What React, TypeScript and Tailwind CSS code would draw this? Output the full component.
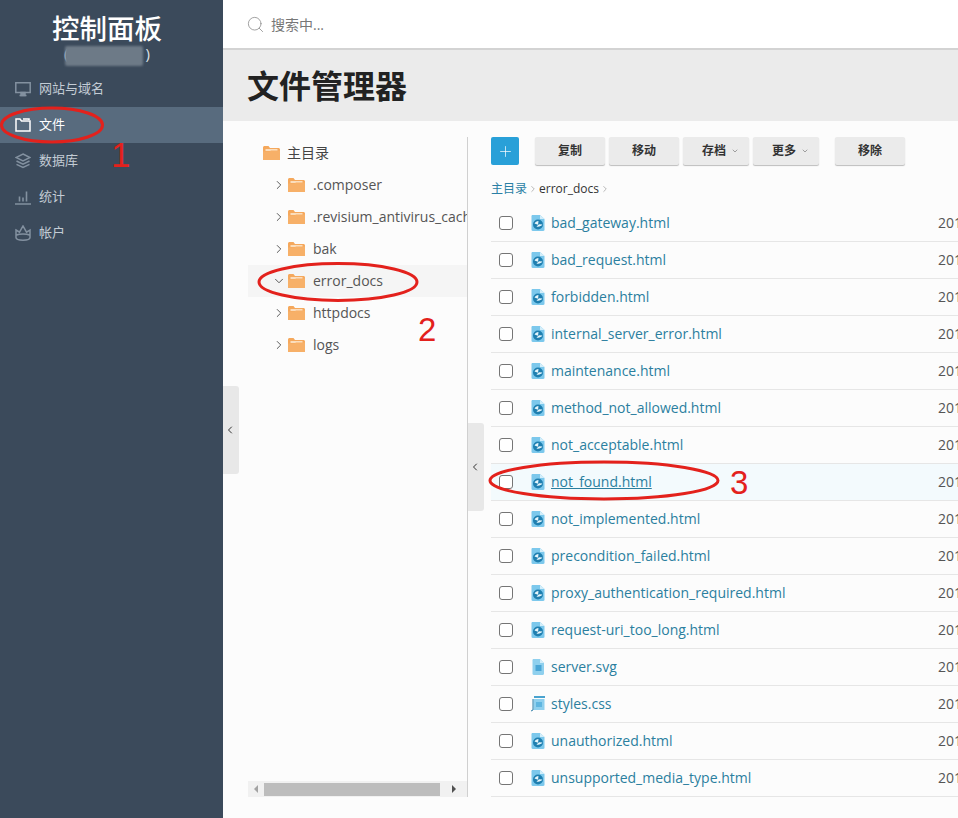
import { ChevronRight, ChevronDown, ChevronLeft, Plus, Search } from "lucide-react";

const FONT = "font-['Open_Sans','Noto_Sans_CJK_SC',sans-serif]";

const FILES = [
  { name: "bad_gateway.html", icon: "html" },
  { name: "bad_request.html", icon: "html" },
  { name: "forbidden.html", icon: "html" },
  { name: "internal_server_error.html", icon: "html" },
  { name: "maintenance.html", icon: "html" },
  { name: "method_not_allowed.html", icon: "html" },
  { name: "not_acceptable.html", icon: "html" },
  { name: "not_found.html", icon: "html", active: true },
  { name: "not_implemented.html", icon: "html" },
  { name: "precondition_failed.html", icon: "html" },
  { name: "proxy_authentication_required.html", icon: "html" },
  { name: "request-uri_too_long.html", icon: "html" },
  { name: "server.svg", icon: "svg" },
  { name: "styles.css", icon: "css" },
  { name: "unauthorized.html", icon: "html" },
  { name: "unsupported_media_type.html", icon: "html" },
];

const FOLDERS = [".composer", ".revisium_antivirus_cache", "bak", "error_docs", "httpdocs", "logs"];

function FolderIcon() {
  return (
    <svg width="17" height="14" viewBox="0 0 17 14" className="shrink-0">
      <path d="M0 1.5C0 .7.7 0 1.5 0h4L7 2h8.5c.8 0 1.5.7 1.5 1.5V14H0z" fill="#f5a85c" />
      <path d="M2.5 3.2h12v1.6h-12z" fill="#fdebd6" />
      <path d="M0 5.5h6.5L8 4.6h9V14H0z" fill="#f7b068" />
    </svg>
  );
}

function FileIcon({ kind }: { kind: string }) {
  if (kind === "css") {
    return (
      <svg width="16" height="16" viewBox="0 0 16 16" className="shrink-0">
        <path d="M4 0h11v2H4z" fill="#4aa3cf" />
        <path d="M3.5 3h11v11h-11z" fill="#8fd0ee" />
        <path d="M6 6h6v5H6z" fill="#5fb6e0" />
        <path d="M3 3v11L1 15" stroke="#2f7fa8" fill="none" />
      </svg>
    );
  }
  if (kind === "svg") {
    return (
      <svg width="16" height="16" viewBox="0 0 16 16" className="shrink-0">
        <path d="M2.5 1.2C2.5.5 3 0 3.7 0H10l4 4v10.8c0 .7-.5 1.2-1.200 1.200H3.700c-.7 0-1.200-.5-1.200-1.200z" fill="#8fd0ee" />
        <path d="M10 0l4 4h-4z" fill="#d3eefa" />
        <path d="M5.500 6h6v6h-6z" fill="#4aa6d6" />
      </svg>
    );
  }
  return (
    <svg width="16" height="16" viewBox="0 0 16 16" className="shrink-0">
      <path d="M1.500 1.200C1.500.5 2 0 2.700 0H10l4.500 4v10.800c0 .7-.5 1.200-1.200 1.200H2.700c-.7 0-1.200-.5-1.200-1.200z" fill="#7cc8ec" />
      <path d="M10 0l4.500 4H10z" fill="#d3eefa" />
      <circle cx="8" cy="9.500" r="5" fill="#1f7fb0" />
      <path d="M4.500 8.500c.8-1.800 2.200-2.600 4-2.600L8 9.800z" fill="#e6f6fc" />
      <path d="M6.500 11.500c2 .6 4.800-.1 5.900-1.900l-3.400-.3z" fill="#e6f6fc" />
    </svg>
  );
}

function ActionButton({ label, caret }: { label: string; caret?: boolean }) {
  return (
    <button className={`flex h-7 items-center rounded-[2px] bg-[#ebebeb] text-xs font-semibold text-[#333] shadow-[0_1px_1px_rgba(0,0,0,0.25)] ${caret ? "w-[66px] gap-[5px] pl-[19px]" : "w-[70px] justify-center"}`}>
      {label}
      {caret && <ChevronDown size={8} className="text-[#777]" />}
    </button>
  );
}

function NavItem({ label, icon, active }: { label: string; icon: React.ReactNode; active?: boolean }) {
  return (
    <div className={`flex h-9 items-center gap-2 pl-[15px] text-[13px] ${active ? "bg-[#586b7e] text-white" : "text-[#c3ccd5]"}`}>
      <span className={`flex w-4 justify-center ${active ? "text-white" : "text-[#8391a0]"}`}>{icon}</span>
      {label}
    </div>
  );
}

export default function App() {
  return (
    <div className={`relative flex h-[818px] w-[958px] overflow-hidden bg-[#fcfcfc] ${FONT}`}>
      {/* Sidebar */}
      <aside className="w-[223px] shrink-0 bg-[#3b4a5b]">
        <div className="flex h-[71px] flex-col items-center pr-[9px] pt-[13px]">
          <div className="text-[27.500px] font-medium leading-[32px] text-white">控制面板</div>
          <div className="relative flex h-[16px] w-[86px] items-center justify-between text-[15px] leading-none text-[#dfe3e7]">
            <span>(</span>
            <span>)</span>
            <div className="absolute left-[1px] top-[1px] h-[20px] w-[78px] rounded-[2px] bg-[#6d7a87] blur-[1px]" />
          </div>
        </div>
        <nav>
          <NavItem
            label="网站与域名"
            icon={
              <svg width="16" height="15" viewBox="0 0 16 15" fill="none" stroke="currentColor" strokeWidth="1.500">
                <path d="M.8.8h14.400v9.700H.8zM4.500 13.500h7" />
                <path d="M6 10.500h4v3H6z" fill="currentColor" />
              </svg>
            }
          />
          <NavItem
            label="文件"
            active
            icon={
              <svg width="16" height="14" viewBox="0 0 16 14" fill="none" stroke="currentColor" strokeWidth="1.500">
                <path d="M1 1h4l1.500 2H15v10H1zM8 1h6v1" />
              </svg>
            }
          />
          <NavItem
            label="数据库"
            icon={
              <svg width="16" height="16" viewBox="0 0 16 16" fill="none" stroke="currentColor" strokeWidth="1.500">
                <path d="M8 1l7 3.500L8 8 1 4.500zM1.500 8L8 11.200 14.500 8M1.500 11.300L8 14.500l6.500-3.200" />
              </svg>
            }
          />
          <NavItem
            label="统计"
            icon={
              <svg width="16" height="15" viewBox="0 0 16 15" fill="none" stroke="currentColor" strokeWidth="1.600">
                <path d="M0 14h16M4.500 11.500V6.500M8 11.500V7.500M11.500 11.500V1.500" />
              </svg>
            }
          />
          <NavItem
            label="帐户"
            icon={
              <svg width="16" height="16" viewBox="0 0 16 16" fill="none" stroke="currentColor" strokeWidth="1.500">
                <path d="M1 5l3.500 2.200L8 1l3.500 6.200L15 5v7.500c0 1.500-3 2.700-7 2.700s-7-1.200-7-2.700zM1.500 10c3-1.500 10-1.500 13 0" />
              </svg>
            }
          />
        </nav>
      </aside>

      <main className="flex min-w-0 flex-1 flex-col">
        {/* Search bar */}
        <header className="flex h-[50px] items-center gap-[6px] border-b-2 border-[#d3d3d3] bg-white pl-[23px] pt-[1px]">
          <Search size={19} strokeWidth={1} className="text-[#8a8a8a]" />
          <span className="text-sm text-[#777]">搜索中...</span>
        </header>

        {/* Title */}
        <div className="flex h-[71px] items-center bg-[#ebebeb] pl-[24px]">
          <h1 className="text-[32px] font-bold text-[#222]">文件管理器</h1>
        </div>

        <div className="relative flex flex-1 pl-[25px]">
          {/* Left collapse handle */}
          <div className="absolute left-0 top-[265px] flex h-[88px] w-4 items-center justify-center rounded-r-[3px] bg-[#e8e8e8] pr-[2px]">
            <ChevronLeft size={12} className="text-[#333]" />
          </div>

          {/* Folder tree */}
          <section className="mb-[21px] mt-4 flex w-[220px] shrink-0 flex-col border-r border-[#d0d0d0]">
            <div className="flex-1 overflow-hidden">
              <div className="flex h-8 items-center gap-[7px] pl-[15px] text-sm text-[#444]">
                <FolderIcon />
                主目录
              </div>
              {FOLDERS.map((name) => {
                const open = name === "error_docs";
                return (
                  <div key={name} className={`flex h-8 items-center whitespace-nowrap pl-[24px] text-sm text-[#555] ${open ? "bg-[#f5f5f5]" : ""}`}>
                    {open ? (
                      <ChevronDown size={14} strokeWidth={1.5} className="shrink-0 text-[#444]" />
                    ) : (
                      <ChevronRight size={14} strokeWidth={1.5} className="shrink-0 text-[#444]" />
                    )}
                    <span className="ml-[2px] mr-2 flex"><FolderIcon /></span>
                    {name}
                  </div>
                );
              })}
            </div>
            {/* Tree scrollbar */}
            <div className="flex h-[16px] items-center bg-[#f1f1f1]">
              <div className="flex w-4 justify-center">
                <div className="h-0 w-0 border-y-[4px] border-r-[4px] border-y-transparent border-r-[#a3a3a3]" />
              </div>
              <div className="h-[13px] w-[176px] bg-[#bdbdbd]" />
              <div className="flex flex-1 justify-center">
                <div className="h-0 w-0 border-y-[4px] border-l-[4px] border-y-transparent border-l-[#505050]" />
              </div>
            </div>
          </section>

          {/* File pane */}
          <section className="relative min-w-0 flex-1 pl-[23px] pt-4">
            <div className="absolute left-0 top-[302px] flex h-[88px] w-4 items-center justify-center rounded-r-[3px] bg-[#e8e8e8] pr-[2px]">
              <ChevronLeft size={12} className="text-[#333]" />
            </div>
            <div className="flex items-center">
              <button className="flex h-7 w-7 items-center justify-center rounded-[2px] bg-[#29a0d8] text-white">
                <Plus size={17} strokeWidth={1} />
              </button>
              <div className="ml-4 flex gap-1">
                <ActionButton label="复制" />
                <ActionButton label="移动" />
                <ActionButton label="存档" caret />
                <ActionButton label="更多" caret />
              </div>
              <div className="ml-4">
                <ActionButton label="移除" />
              </div>
            </div>
            <div className="mt-4 flex h-4 items-center text-xs">
              <span className="text-[#2a7fa5]">主目录</span>
              <ChevronRight size={10} className="mx-[1px] text-[#aaa]" />
              <span className="text-[#333]">error_docs</span>
              <ChevronRight size={10} className="mx-[1px] text-[#aaa]" />
            </div>
            <div className="mt-2">
              {FILES.map((f) => (
                <div key={f.name} className={`flex h-[37px] items-center border-b border-[#e6e6e6] pl-[8px] text-sm text-[#2b7f9f] ${f.active ? "bg-[#f3fafd]" : ""}`}>
                  <span className="h-[14px] w-[14px] shrink-0 rounded-[3px] border border-[#757575] bg-white" />
                  <span className="ml-[17px] mr-[5px] flex"><FileIcon kind={f.icon} /></span>
                  <span className={f.active ? "underline" : ""}>{f.name}</span>
                  <span className="ml-auto w-[20px] overflow-hidden text-[#555]">2019</span>
                </div>
              ))}
            </div>
          </section>
        </div>
      </main>

      {/* Red tutorial annotations */}
      <svg width="958" height="818" className="pointer-events-none absolute left-0 top-0" fill="none" stroke="#e3211c" strokeWidth="3">
        <ellipse cx="52" cy="125" rx="50.500" ry="17" />
        <ellipse cx="338" cy="282" rx="79" ry="18.500" />
        <ellipse cx="604" cy="480.500" rx="114" ry="18.500" />
      </svg>
      <span className="absolute left-[111px] top-[133px] font-['Liberation_Sans',sans-serif] text-[35px] leading-[44px] text-[#e3211c]">1</span>
      <span className="absolute left-[418px] top-[308px] font-['Liberation_Sans',sans-serif] text-[33px] leading-[44px] text-[#e3211c]">2</span>
      <span className="absolute left-[730px] top-[461px] font-['Liberation_Sans',sans-serif] text-[33px] leading-[44px] text-[#e3211c]">3</span>
    </div>
  );
}
